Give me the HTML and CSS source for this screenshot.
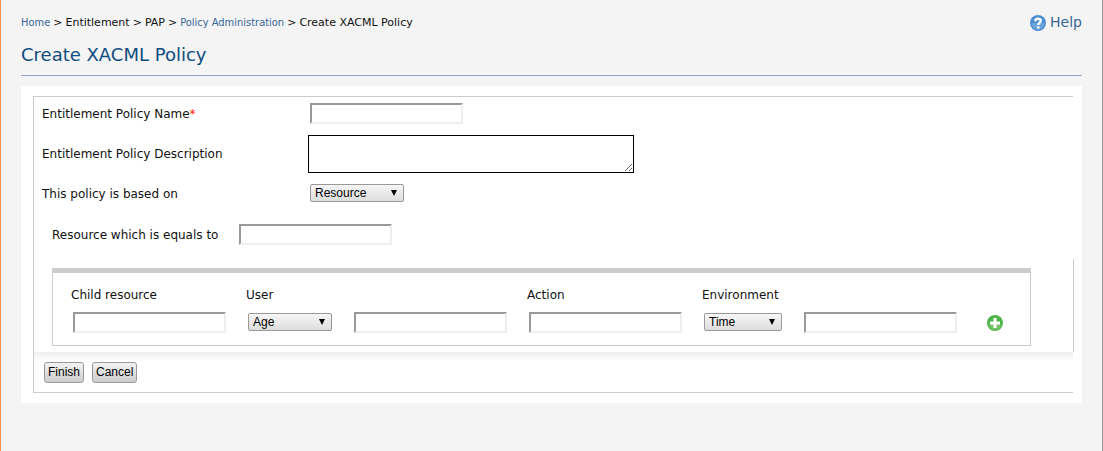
FILE: index.html
```html
<!DOCTYPE html>
<html lang="en">
<head>
<meta charset="utf-8">
<title>Create XACML Policy</title>
<link rel="stylesheet" href="styles.css">
</head>
<body>
<div class="page">
  <header class="header">
    <nav class="breadcrumb" aria-label="Breadcrumb">
      <a href="#">Home</a>
      <span>&gt;</span>
      <span>Entitlement</span>
      <span>&gt;</span>
      <span>PAP</span>
      <span>&gt;</span>
      <a href="#">Policy Administration</a>
      <span>&gt;</span>
      <span>Create XACML Policy</span>
    </nav>
    <a class="help" href="#">
      <svg width="16" height="16" viewBox="0 0 16 16" aria-hidden="true">
        <circle cx="8" cy="8" r="8" fill="#4a8fd0"/>
        <path d="M1.500 8h13a6.500 6.500 0 0 1-13 0z" fill="#6ea3db"/>
        <path d="M5.200 6.300C5.300 4.500 6.400 3.700 8 3.700c1.700 0 2.700 0.900 2.700 2.100 0 1.900-2.400 1.900-2.400 4.300" fill="none" stroke="#fff" stroke-width="2.400"/>
        <rect x="7" y="11.400" width="2.600" height="2.200" fill="#fff"/>
      </svg>
      <span>Help</span>
    </a>
  </header>
  <h1 class="title">Create XACML Policy</h1>
  <main class="panel">
    <form class="form">
      <div class="row row-name">
        <label for="name">Entitlement Policy Name<span class="required">*</span></label>
        <input class="field" id="name" type="text">
      </div>
      <div class="row row-description">
        <label for="description">Entitlement Policy Description</label>
        <textarea class="description" id="description"></textarea>
      </div>
      <div class="row row-basis">
        <label for="basis">This policy is based on</label>
        <span class="picker picker-basis">
          <select id="basis"><option>Resource</option><option>Subject</option><option>Action</option><option>Environment</option></select>
          <svg class="arrow" width="8" height="6" viewBox="0 0 8 6" aria-hidden="true"><path d="M1 0h6L4 6z"/></svg>
        </span>
      </div>
      <div class="match">
        <label for="resource">Resource which is equals to</label>
        <input class="field" id="resource" type="text">
      </div>
      <div class="rules">
        <div class="rule-box">
          <label class="head" for="child">Child resource</label>
          <label class="head head-wide" for="user">User</label>
          <label class="head" for="action">Action</label>
          <label class="head head-wide" for="environment">Environment</label>
          <span class="head"></span>
          <input class="field" id="child" type="text">
          <span class="picker picker-user">
            <select id="user"><option>Age</option><option>Email</option></select>
            <svg class="arrow" width="8" height="6" viewBox="0 0 8 6" aria-hidden="true"><path d="M1 0h6L4 6z"/></svg>
          </span>
          <input class="field" type="text" aria-label="User value">
          <input class="field" id="action" type="text">
          <span class="picker picker-environment">
            <select id="environment"><option>Time</option><option>Date</option></select>
            <svg class="arrow" width="8" height="6" viewBox="0 0 8 6" aria-hidden="true"><path d="M1 0h6L4 6z"/></svg>
          </span>
          <input class="field" type="text" aria-label="Environment value">
          <button class="add" type="button" aria-label="Add rule">
            <svg width="16" height="16" viewBox="0 0 16 16" aria-hidden="true">
              <circle cx="8" cy="8" r="8" fill="#4fb548"/>
              <path d="M2 9h12a6 6 0 0 1-12 0z" fill="#76c46b"/>
              <path d="M8 3v10M3 8h10" fill="none" stroke="#fff" stroke-width="3"/>
            </svg>
          </button>
        </div>
      </div>
      <div class="actions">
        <button class="button" type="button">Finish</button>
        <button class="button" type="button">Cancel</button>
      </div>
    </form>
  </main>
</div>
</body>
</html>
```
FILE: styles.css
```css
* {
  box-sizing: border-box;
}

body {
  margin: 0;
  background: #f4f4f4;
  color: #111;
  font: 12px/16px "DejaVu Sans", sans-serif;
}

.page {
  min-height: 100vh;
  padding: 14px 20px 20px;
  border-left: 1px solid #f58b45;
  border-right: 1px solid #999;
}

.header {
  display: flex;
  justify-content: space-between;
}

.breadcrumb {
  display: flex;
  gap: 3px;
  font-size: 11px;
  line-height: 17px;
}

.breadcrumb a {
  color: #386698;
  font-family: "DejaVu Sans Condensed", "DejaVu Sans", sans-serif;
  font-stretch: condensed;
  text-decoration: none;
}

.help {
  display: flex;
  gap: 4px;
  align-items: center;
  color: #386698;
  font-size: 14px;
  line-height: 17px;
  text-decoration: none;
}

.title {
  margin: 0 0 10px;
  padding: 12px 0 9px;
  border-bottom: 1px solid #94a4cb;
  color: #0d4d80;
  font-size: 18px;
  font-weight: 400;
  line-height: 23px;
}

.panel {
  padding: 10px 8px 10px 12px;
  background: #fff;
}

.form {
  border-left: 1px solid #ccc;
  background:
    linear-gradient(#ccc, #ccc) 0 0 / calc(100% - 1px) 1px no-repeat,
    linear-gradient(#ccc, #ccc) 0 100% / calc(100% - 1px) 1px no-repeat;
}

.row {
  display: grid;
  grid-template-columns: 266px 1fr;
  align-items: center;
  padding-left: 8px;
}

.row-name {
  height: 35px;
}

.row-description {
  height: 45px;
}

.row-basis {
  height: 35px;
}

.required {
  color: #f20;
}

.field {
  width: 153px;
  height: 21px;
  padding: 1px;
  border: 2px solid;
  border-color: #999 #eee #eee #999;
  background: #fff;
  font: 12px "Liberation Sans", sans-serif;
}

.row > .field,
.row > .picker {
  margin-left: 2px;
}

.description {
  width: 326px;
  height: 38px;
  border: 1px solid #000;
  background: #fff;
  font: 12px "Liberation Sans", sans-serif;
}

.picker {
  display: flex;
  position: relative;
  padding-bottom: 1px;
}

.picker select {
  width: 100%;
  height: 18px;
  padding: 0 4px;
  border: 1px solid #999;
  border-radius: 2px;
  appearance: none;
  background: linear-gradient(#f6f6f6, #ddd);
  color: #000;
  font: 12px/16px "Liberation Sans", sans-serif;
}

.arrow {
  position: absolute;
  top: 6px;
  right: 6px;
  pointer-events: none;
}

.picker-basis {
  width: 94px;
}

.picker-user {
  width: 84px;
}

.picker-environment {
  width: 78px;
}

.match {
  display: grid;
  grid-template-columns: 187px 1fr;
  align-items: center;
  height: 48px;
  padding: 0 0 1px 18px;
}

.rules {
  padding: 9px 42px 6px 18px;
  border-right: 1px solid #ccc;
}

.rule-box {
  display: grid;
  grid-template-columns: 175px 106px 175px 175px 100px 183px 1fr;
  align-items: center;
  row-gap: 9px;
  padding: 14px 18px 12px 20px;
  border: 1px solid #ccc;
  border-top-width: 5px;
}

.head {
  margin-left: -2px;
}

.head-wide {
  grid-column: span 2;
}

.add {
  display: flex;
  width: 16px;
  padding: 0;
  border: 0;
  background: none;
}

.actions {
  display: flex;
  gap: 8px;
  margin-right: 1px;
  padding: 10px;
  background: linear-gradient(#eee, rgba(255, 255, 255, 0) 9px);
}

.button {
  height: 21px;
  padding: 0 3px 2px;
  border: 1px solid #999;
  border-radius: 3px;
  background: linear-gradient(#f3f3f3, #ccc);
  color: #000;
  font: 12px/16px "Liberation Sans", sans-serif;
}
```
